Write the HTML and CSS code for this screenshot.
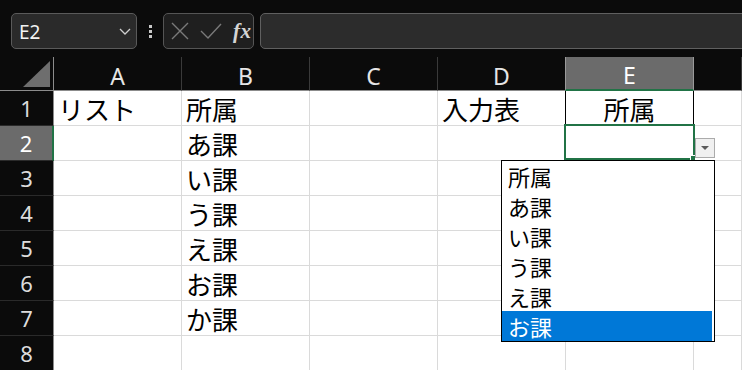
FILE: index.html
```html
<!DOCTYPE html>
<html lang="ja">
<head>
<meta charset="utf-8">
<title>Excel</title>
<link rel="stylesheet" href="styles.css">
</head>
<body>
<div class="app">
  <div class="toolbar">
    <div class="namebox">
      <span class="ref">E2</span>
      <svg class="chev" width="12" height="7" viewBox="0 0 12 7"><polyline points="1,1 6,6 11,1" fill="none" stroke="#cfcfcf" stroke-width="1.3"/></svg>
    </div>
    <div class="dots"><i></i><i></i><i></i></div>
    <div class="fxbtns">
      <svg width="18" height="18" viewBox="0 0 18 18"><path d="M1 1 L17 17 M17 1 L1 17" stroke="#7a7a7a" stroke-width="1.4" fill="none"/></svg>
      <svg width="22" height="16" viewBox="0 0 22 16"><polyline points="1,8 8,15 21,1" stroke="#7a7a7a" stroke-width="1.4" fill="none"/></svg>
      <span class="fx">fx</span>
    </div>
    <div class="formula"></div>
  </div>
  <div class="sheet">
    <div class="corner"><svg width="53" height="33" viewBox="0 0 53 33"><polygon points="23,30 50,30 50,4" fill="#6e6e6e"/></svg></div>
    <div class="ch">A</div><div class="ch">B</div><div class="ch">C</div><div class="ch">D</div><div class="ch sel">E</div><div class="ch"></div>

    <div class="rh">1</div><div class="c">リスト</div><div class="c">所属</div><div class="c"></div><div class="c tl">入力表</div><div class="c tbl center">所属</div><div class="c"></div>
    <div class="rh sel">2</div><div class="c"></div><div class="c">あ課</div><div class="c"></div><div class="c"></div><div class="c"></div><div class="c"></div>
    <div class="rh">3</div><div class="c"></div><div class="c">い課</div><div class="c"></div><div class="c"></div><div class="c"></div><div class="c"></div>
    <div class="rh">4</div><div class="c"></div><div class="c">う課</div><div class="c"></div><div class="c"></div><div class="c"></div><div class="c"></div>
    <div class="rh">5</div><div class="c"></div><div class="c">え課</div><div class="c"></div><div class="c"></div><div class="c"></div><div class="c"></div>
    <div class="rh">6</div><div class="c"></div><div class="c">お課</div><div class="c"></div><div class="c"></div><div class="c"></div><div class="c"></div>
    <div class="rh">7</div><div class="c"></div><div class="c">か課</div><div class="c"></div><div class="c"></div><div class="c"></div><div class="c"></div>
    <div class="rh">8</div><div class="c"></div><div class="c"></div><div class="c"></div><div class="c"></div><div class="c"></div><div class="c"></div>

    <div class="selection"><span class="handle"></span></div>
    <div class="ddbtn"><svg width="8" height="4" viewBox="0 0 8 4"><polygon points="0,0 8,0 4,4" fill="#5a5a5a"/></svg></div>
    <ul class="ddlist">
      <li>所属</li>
      <li>あ課</li>
      <li>い課</li>
      <li>う課</li>
      <li>え課</li>
      <li class="hi">お課</li>
    </ul>
  </div>
</div>
</body>
</html>
```
FILE: styles.css
```css
html, body {
  margin: 0;
  padding: 0;
  background: #0b0b0b;
  overflow: hidden;
}
.app {
  width: 742px;
  height: 370px;
  overflow: hidden;
  font-family: "Noto Sans", "Noto Sans CJK JP", sans-serif;
}
.toolbar {
  height: 57px;
  box-sizing: border-box;
  padding: 13px 0 0 11px;
  display: flex;
  align-items: flex-start;
  background: #0b0b0b;
}
.namebox {
  width: 126px;
  height: 36px;
  box-sizing: border-box;
  border: 1px solid #5a5a5a;
  border-radius: 5px;
  background: #2a2a2a;
  display: flex;
  align-items: center;
  justify-content: space-between;
  padding: 0 5px 0 7px;
  color: #f2f2f2;
  font-size: 19px;
}
.namebox .ref { padding-top: 1px; }
.dots {
  width: 26px;
  height: 36px;
  display: flex;
  flex-direction: column;
  align-items: center;
  justify-content: center;
  gap: 2px;
}
.dots i {
  display: block;
  width: 3px;
  height: 3px;
  background: #c8c8c8;
}
.fxbtns {
  width: 91px;
  height: 36px;
  box-sizing: border-box;
  border: 1px solid #555;
  border-radius: 5px;
  background: #1f1f1f;
  display: flex;
  align-items: center;
  padding: 0 0 0 7px;
  gap: 11px;
}
.fx {
  font-family: "Liberation Serif", "DejaVu Serif", serif;
  font-style: italic;
  font-weight: bold;
  font-size: 21px;
  color: #d4d4d4;
  letter-spacing: 0.5px;
}
.formula {
  flex: 1;
  height: 36px;
  margin-left: 6px;
  margin-right: -10px;
  box-sizing: border-box;
  border: 1px solid #606060;
  border-radius: 5px;
  background: #2c2c2c;
}
.sheet {
  position: relative;
  display: grid;
  grid-template-columns: 54px repeat(5, 128px) 1fr;
  grid-template-rows: 34px repeat(8, 35px);
  background: #fff;
}
.corner, .ch {
  background: #0b0b0b;
  box-sizing: border-box;
  border-bottom: 1px solid #8c8c8c;
  border-right: 1px solid #3a3a3a;
}
.corner {
  border-right-color: #8c8c8c;
}
.corner svg { display: block; }
.ch {
  color: #e6e6e6;
  font-size: 23px;
  display: flex;
  align-items: center;
  justify-content: center;
  padding-top: 4px;
}
.ch.sel {
  background: #6b6b6b;
  color: #fff;
  border-bottom: 2px solid #217346;
  border-left: 1px solid #9a9a9a;
  border-right-color: #9a9a9a;
  margin-left: -1px;
}
.rh {
  background: #0b0b0b;
  color: #dcdcdc;
  font-size: 22px;
  box-sizing: border-box;
  border-right: 1px solid #8c8c8c;
  border-bottom: 1px solid #2a2a2a;
  display: flex;
  align-items: center;
  justify-content: center;
}
.rh.sel {
  background: #6b6b6b;
  color: #fff;
  border-right: 2px solid #217346;
}
.c {
  box-sizing: border-box;
  border-right: 1px solid #dadada;
  border-bottom: 1px solid #dadada;
  font-family: "Noto Sans CJK JP", sans-serif;
  font-size: 26px;
  line-height: 35px;
  color: #000;
  padding-left: 4px;
  white-space: nowrap;
}
.c.tl { border-right-color: #000; }
.c.tbl {
  border-right-color: #000;
  border-bottom-color: #000;
}
.c.center {
  text-align: center;
  padding-left: 0;
}
.selection {
  position: absolute;
  left: 564px;
  top: 67px;
  width: 131px;
  height: 36px;
  box-sizing: border-box;
  border: 2px solid #217346;
}
.handle {
  position: absolute;
  right: -3px;
  bottom: -3px;
  width: 4px;
  height: 4px;
  background: #217346;
  border: 1px solid #fff;
}
.ddbtn {
  position: absolute;
  left: 695px;
  top: 81px;
  width: 20px;
  height: 20px;
  box-sizing: border-box;
  border: 1px solid #ababab;
  background: #f0f0f0;
  display: flex;
  align-items: center;
  justify-content: center;
}
.ddbtn svg { display: block; }
.ddlist {
  position: absolute;
  left: 501px;
  top: 103px;
  width: 214px;
  margin: 0;
  padding: 0 2px 0 0;
  list-style: none;
  box-sizing: border-box;
  border: 1px solid #000;
  background: #fff;
}
.ddlist li {
  height: 30px;
  line-height: 30px;
  font-family: "Noto Sans CJK JP", sans-serif;
  font-size: 22px;
  color: #000;
  padding-left: 6px;
}
.ddlist li.hi {
  background: #0078d7;
  color: #fff;
}
```
